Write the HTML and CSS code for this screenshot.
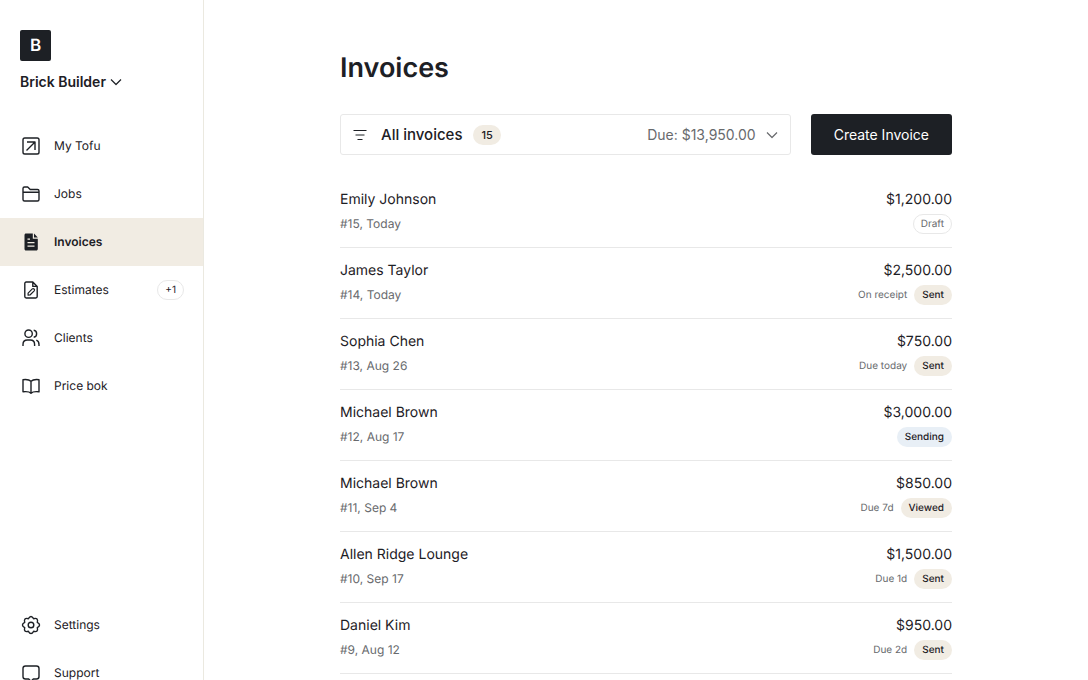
FILE: index.html
```html
<!DOCTYPE html>
<html lang="en">
<head>
<meta charset="utf-8">
<meta name="viewport" content="width=device-width, initial-scale=1">
<title>Invoices</title>
<link rel="stylesheet" href="styles.css">
</head>
<body>
<div class="app">
  <aside class="sidebar">
    <div class="brand">
      <div class="logo">B</div>
      <button class="account" type="button">Brick Builder
        <svg class="chevron" viewBox="0 0 12 12"><path d="M1 3.500 6 8.500l5-5"/></svg>
      </button>
    </div>
    <nav class="nav" aria-label="Main">
      <a class="nav-item" href="#"><svg class="icon" viewBox="0 0 20 20"><rect x="2" y="2" width="16" height="16" rx="1.800"/><path d="M6 6h8v8M14 6l-8.500 8.500"/></svg>My Tofu</a>
      <a class="nav-item" href="#"><svg class="icon" viewBox="0 0 20 20"><path d="M2 7.500V4.500C2 3.600 2.600 3 3.500 3h3.200l2.500 2.500h7.300c.9 0 1.500.6 1.500 1.500v8.500c0 .9-.6 1.500-1.500 1.500h-13C2.600 17 2 16.400 2 15.500zM2 8.200h16"/></svg>Jobs</a>
      <a class="nav-item active" href="#" aria-current="page"><svg class="icon" viewBox="0 0 20 20"><path class="solid" d="M5 1.500h6.800v5.200h5V17c0 .9-.7 1.500-1.500 1.500H5c-.9 0-1.500-.6-1.500-1.500V3c0-.9.600-1.500 1.500-1.500z"/><path class="solid" d="M13 1.500l3.800 4H13z"/><path class="cut" d="M6.500 7.200h2.500M6.500 10.700h7M6.500 14.200h7"/></svg>Invoices</a>
      <a class="nav-item" href="#"><svg class="icon" viewBox="0 0 20 20"><path d="M11.800 2H5.200C4.400 2 3.800 2.600 3.800 3.400v13.200c0 .8.600 1.400 1.400 1.400h9.600c.8 0 1.400-.6 1.400-1.400V6.400zM11.800 2v4.400h4.400"/><path class="fine" d="M7.100 15.200v-2.100l4.200-4.200c1.200-1 2.900.7 1.900 1.900l-4.200 4.200z"/></svg>Estimates<span class="count">+1</span></a>
      <a class="nav-item" href="#"><svg class="icon" viewBox="0 0 20 20"><circle cx="7.600" cy="5.700" r="3.700"/><path d="M2 18v-1.600c0-2.600 1.900-4.400 4.400-4.400h2.800c2.500 0 4.400 1.800 4.400 4.400V18M12.700 2.200c3.900.5 3.900 6.500 0 7M15.300 12.200c1.700.6 2.700 2.100 2.700 4.200V18"/></svg>Clients</a>
      <a class="nav-item" href="#"><svg class="icon" viewBox="0 0 20 20"><path d="M10 5.300C8.500 3.800 5.300 3.300 2 3.700v12.100c3.300-.4 6.500-.1 8 1.400 1.500-1.500 4.700-1.800 8-1.400V3.700c-3.300-.4-6.500.1-8 1.600zM10 5.300v11.900"/></svg>Price bok</a>
    </nav>
    <nav class="nav nav-secondary" aria-label="Help">
      <a class="nav-item" href="#"><svg class="icon" viewBox="0 0 20 20"><path d="M7.400 3.700Q10-.8 12.600 3.700 17.600 2.400 16.300 7.400 20.800 10 16.300 12.600 17.600 17.600 12.600 16.300 10 20.800 7.400 16.300 2.400 17.600 3.700 12.600-.8 10 3.700 7.400 2.400 2.400 7.400 3.700z"/><circle cx="10" cy="10" r="2.800"/></svg>Settings</a>
      <a class="nav-item" href="#"><svg class="icon" viewBox="0 0 20 20"><path d="M4.500 3h11C17 3 18 4 18 5.500v8c0 1.500-1 2.500-2.500 2.500h-3.200L10 18.300 7.700 16H4.500C3 16 2 15 2 13.500v-8C2 4 3 3 4.500 3z"/></svg>Support</a>
    </nav>
  </aside>
  <main class="main">
    <div class="content">
      <h1 class="title">Invoices</h1>
      <div class="toolbar">
        <button class="filter" type="button">
          <svg class="filter-icon" viewBox="0 0 14 14"><path d="M.5 2.500h13M2.500 7h9M4.500 11.500h5"/></svg>
          <span class="filter-name">All invoices</span>
          <span class="badge total">15</span>
          <span class="filter-due">Due: $13,950.00</span>
          <svg class="chevron" viewBox="0 0 12 12"><path d="M1 3.500 6 8.500l5-5"/></svg>
        </button>
        <button class="create" type="button">Create Invoice</button>
      </div>
      <ul class="invoices">
        <li class="invoice"><span class="name">Emily Johnson</span><span class="amount">$1,200.00</span><span class="meta">#15, Today</span><span class="status"><span class="badge draft">Draft</span></span></li>
        <li class="invoice"><span class="name">James Taylor</span><span class="amount">$2,500.00</span><span class="meta">#14, Today</span><span class="status">On receipt<span class="badge">Sent</span></span></li>
        <li class="invoice"><span class="name">Sophia Chen</span><span class="amount">$750.00</span><span class="meta">#13, Aug 26</span><span class="status">Due today<span class="badge">Sent</span></span></li>
        <li class="invoice"><span class="name">Michael Brown</span><span class="amount">$3,000.00</span><span class="meta">#12, Aug 17</span><span class="status"><span class="badge sending">Sending</span></span></li>
        <li class="invoice"><span class="name">Michael Brown</span><span class="amount">$850.00</span><span class="meta">#11, Sep 4</span><span class="status">Due 7d<span class="badge">Viewed</span></span></li>
        <li class="invoice"><span class="name">Allen Ridge Lounge</span><span class="amount">$1,500.00</span><span class="meta">#10, Sep 17</span><span class="status">Due 1d<span class="badge">Sent</span></span></li>
        <li class="invoice"><span class="name">Daniel Kim</span><span class="amount">$950.00</span><span class="meta">#9, Aug 12</span><span class="status">Due 2d<span class="badge">Sent</span></span></li>
      </ul>
    </div>
  </main>
</div>
</body>
</html>
```
FILE: styles.css
```css
:root {
  --ink: #1d2025;
  --muted: #686a6d;
  --sand: #f1ece3;
  --line: #e8e8e8;
}

* { box-sizing: border-box; }

body {
  margin: 0;
  background: #fff;
  color: var(--ink);
  font: 14px/20px Inter, "Liberation Sans", sans-serif;
  text-rendering: geometricPrecision;
}

button {
  font: inherit;
  color: inherit;
  background: none;
  border: 0;
  padding: 0;
  cursor: pointer;
}

svg {
  fill: none;
  stroke: currentColor;
  stroke-linejoin: round;
  flex: none;
}

.app {
  display: flex;
  height: 100vh;
  overflow: hidden;
}

.sidebar {
  flex: 0 0 204px;
  border-right: 1px solid #ebe9e0;
  overflow-y: auto;
  scrollbar-width: none;
}

.brand {
  padding: 30px 20px;
}

.logo {
  display: grid;
  place-items: center;
  width: 31px;
  height: 31px;
  margin-bottom: 11px;
  border-radius: 2px;
  background: var(--ink);
  color: #fff;
  font-size: 17px;
  font-weight: 600;
}

.account {
  display: flex;
  align-items: center;
  gap: 4px;
  font-weight: 600;
}

.chevron {
  width: 12px;
  height: 12px;
  stroke-width: 1.2;
}

.nav-item {
  display: flex;
  align-items: center;
  gap: 13px;
  height: 48px;
  padding: 0 19px 0 21px;
  color: inherit;
  font-size: 12px;
  text-decoration: none;
}

.nav-item.active {
  background: var(--sand);
  font-weight: 600;
}

.nav-secondary { margin-top: 191px; }

.icon {
  width: 20px;
  height: 20px;
  stroke-width: 1.4;
}

.solid { fill: currentColor; stroke: none; }
.cut { stroke: var(--sand); stroke-width: 1.3; }
.fine { stroke-width: 1.2; }

.count {
  margin-left: auto;
  padding: 0 7px;
  border: 1px solid var(--line);
  border-radius: 10px;
  font-size: 10px;
  line-height: 18px;
}

.main {
  flex: 1;
  min-width: 0;
  padding: 50px 24px 0;
  overflow-y: auto;
  scrollbar-width: none;
}

.content {
  max-width: 612px;
  margin: 0 auto;
}

.title {
  margin: 0 0 28px;
  font-size: 27px;
  font-weight: 600;
  line-height: 36px;
}

.toolbar {
  display: flex;
  gap: 20px;
  margin-bottom: 22px;
}

.filter {
  flex: 1;
  display: flex;
  align-items: center;
  height: 41px;
  padding: 0 12px;
  border: 1px solid var(--line);
  border-radius: 3px;
}

.filter-icon {
  width: 14px;
  height: 14px;
  stroke-width: 1.2;
}

.filter-name {
  margin: 0 11px 0 14px;
  font-size: 15px;
  font-weight: 500;
}

.filter-due {
  margin: 0 10px 0 auto;
  color: var(--muted);
}

.filter .chevron { color: var(--muted); }

.create {
  padding: 0 23px;
  border-radius: 3px;
  background: var(--ink);
  color: #fff;
}

.invoices {
  margin: 0;
  padding: 0;
  list-style: none;
}

.invoice {
  display: grid;
  grid-template-columns: 1fr auto;
  align-items: center;
  row-gap: 4px;
  padding: 13px 0;
  border-bottom: 1px solid var(--line);
}

.amount { text-align: right; }

.meta {
  color: var(--muted);
  font-size: 12px;
}

.status {
  display: flex;
  align-items: center;
  justify-content: flex-end;
  gap: 7px;
  color: var(--muted);
  font-size: 10px;
}

.badge {
  padding: 0 8px;
  border-radius: 10px;
  background: var(--sand);
  color: var(--ink);
  font-weight: 500;
  line-height: 20px;
}

.total { font-size: 11px; }

.draft {
  padding: 0 7px;
  border: 1px solid var(--line);
  background: none;
  color: var(--muted);
  font-weight: 400;
  line-height: 18px;
}

.sending { background: #e8eff6; }
```
